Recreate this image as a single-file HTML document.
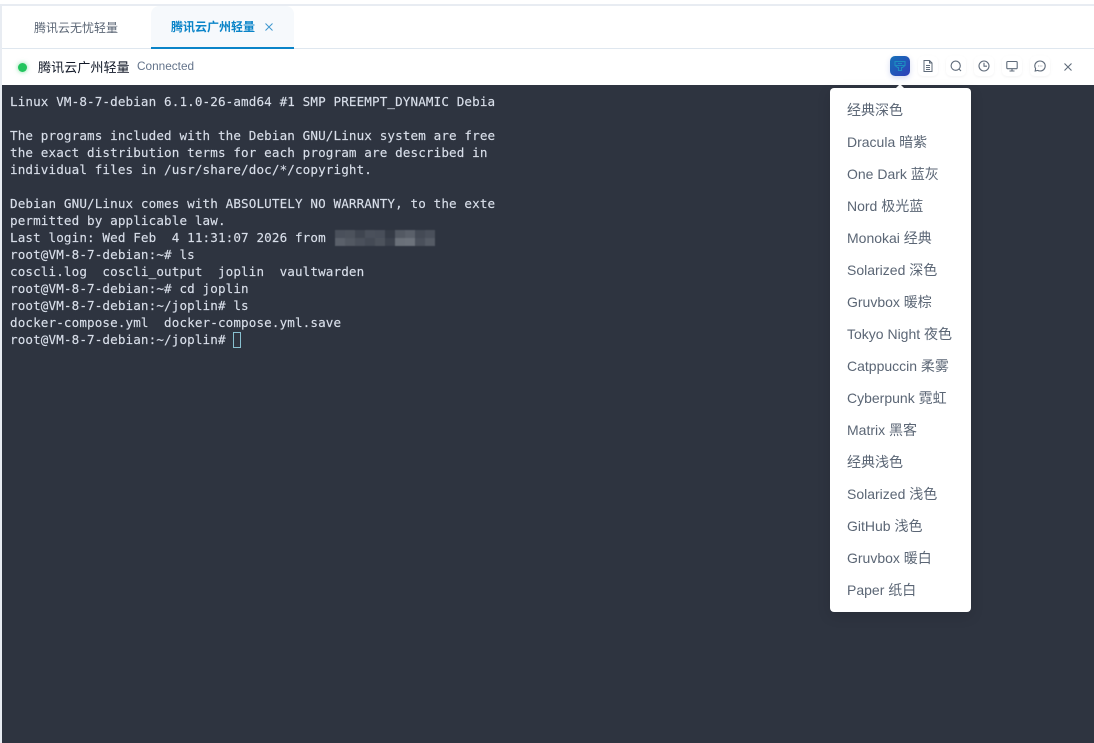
<!DOCTYPE html>
<html><head><meta charset="utf-8">
<style>
*{box-sizing:border-box}
html,body{margin:0;padding:0;width:1094px;height:743px;overflow:hidden;background:#fff;font-family:"Liberation Sans","Noto Sans CJK SC",sans-serif}
.abs{position:absolute}
#top{left:0;top:4px;width:1094px;height:2px;background:#e8ecf2}
#left{left:0;top:4px;width:2px;height:739px;background:#e8ecf2}
#tabline{left:2px;top:48px;width:1092px;height:1px;background:#dfe7ef}
#t1{left:34px;top:19px;font-size:12px;line-height:18px;color:#5b6675;white-space:nowrap}
#t2bg{left:151px;top:6px;width:143px;height:43px;background:#f6f9fc;border-radius:8px 8px 0 0;border-bottom:2px solid #0a84c8}
#t2{left:171px;top:18px;font-size:12px;font-weight:bold;line-height:18px;color:#0a84c8;white-space:nowrap}
#dot{left:17.5px;top:62.5px;width:9px;height:9px;border-radius:50%;background:#22c55e;box-shadow:0 0 5px rgba(34,197,94,.6)}
#name{left:38px;top:59px;font-size:13.1px;line-height:18px;color:#111827;white-space:nowrap}
#conn{left:137px;top:58px;font-size:11.8px;line-height:17px;color:#64748b;white-space:nowrap}
.ib{position:absolute;top:56px;width:20px;height:20px;border-radius:5px;background:#fff;box-shadow:0 1px 3px rgba(15,23,42,.05)}
.ib svg{position:absolute;left:3px;top:3px}
#active{left:890px;background:linear-gradient(135deg,#1470b8,#2f3fb8);box-shadow:0 2px 6px rgba(40,70,180,.2)}
#term{left:2px;top:85px;width:1092px;height:658px;background:#2e3440}
#txt{left:10px;top:93px;margin:0;font-family:"DejaVu Sans Mono","Liberation Mono",monospace;font-size:12.6px;letter-spacing:.12px;line-height:17px;color:#d8dee9;white-space:pre;-webkit-text-stroke:.15px #d8dee9}
#cur{left:233px;top:332px;width:8px;height:16px;border:1px solid #88c0d0}
#blur{left:335px;top:230px;width:100px;height:16px;display:grid;grid-template-columns:repeat(10,10px);grid-template-rows:repeat(2,8px);filter:blur(.6px)}
#menu{left:830px;top:88px;width:141px;height:524px;background:#fff;border-radius:4px;padding-top:6px;box-shadow:0 4px 14px rgba(0,0,0,.12)}
#arrow{left:895px;top:84px;width:0;height:0;border-left:5px solid transparent;border-right:5px solid transparent;border-bottom:5px solid #fff}
.mi{height:32px;line-height:32px;padding-left:17px;font-size:14px;color:#5b6675;white-space:nowrap}
</style></head>
<body>
<div class="abs" id="top"></div>
<div class="abs" id="tabline"></div>
<div class="abs" id="t2bg"></div>
<div class="abs" id="t1">腾讯云无忧轻量</div>
<div class="abs" id="t2">腾讯云广州轻量</div>
<svg class="abs" style="left:264px;top:22px" width="10" height="10" viewBox="0 0 10 10"><path d="M1.5 1.5L8.5 8.5M8.5 1.5L1.5 8.5" stroke="#3f97cf" stroke-width="1" fill="none"/></svg>
<div class="abs" id="dot"></div>
<div class="abs" id="name">腾讯云广州轻量</div>
<div class="abs" id="conn">Connected</div>

<div class="ib" id="active"><svg width="14" height="14" viewBox="0 0 14 14" fill="none" stroke="#1d8ec0" stroke-width="1.1"><path d="M2 2.5H12V6.5H2ZM2 6.5L4.5 8.5H5.5V11.5H8.5V8.5H9.5L12 6.5M5 4.5H9"/></svg></div>
<div class="ib" style="left:918px"><svg width="14" height="14" viewBox="0 0 14 14" fill="none" stroke="#5f6b7a" stroke-width="1"><path d="M3 1.5H8.5L11 4V12.5H3ZM8.5 1.5V4H11M5 6.5H9M5 8.5H9M5 10.5H9"/></svg></div>
<div class="ib" style="left:946px"><svg width="14" height="14" viewBox="0 0 14 14" fill="none" stroke="#5f6b7a" stroke-width="1.1"><circle cx="6.7" cy="6.7" r="4.6"/><path d="M10 10L12 12"/></svg></div>
<div class="ib" style="left:974px"><svg width="14" height="14" viewBox="0 0 14 14" fill="none" stroke="#5f6b7a" stroke-width="1.1"><circle cx="7" cy="7" r="5"/><path d="M7 3.8V7.2H10"/></svg></div>
<div class="ib" style="left:1002px"><svg width="14" height="14" viewBox="0 0 14 14" fill="none" stroke="#5f6b7a" stroke-width="1.1"><rect x="1.8" y="2.5" width="10.4" height="7.2" rx="1"/><path d="M7 9.7V12M4.5 12H9.5"/></svg></div>
<div class="ib" style="left:1030px"><svg width="14" height="14" viewBox="0 0 14 14" fill="none" stroke="#5f6b7a" stroke-width="1.1"><path d="M7 2C4 2 1.8 4.2 1.8 7C1.8 8 2.1 8.9 2.6 9.6L2.2 12L4.6 11.4C5.3 11.8 6.1 12 7 12C10 12 12.2 9.8 12.2 7C12.2 4.2 10 2 7 2Z"/><path d="M5 7H5.6M6.8 7H7.4M8.6 7H9.2"/></svg></div>
<svg class="abs" style="left:1063px;top:62px" width="10" height="10" viewBox="0 0 10 10"><path d="M1.5 1.5L8.5 8.5M8.5 1.5L1.5 8.5" stroke="#5f6b7a" stroke-width="1.1" fill="none"/></svg>

<div class="abs" id="term"></div>
<div class="abs" id="left"></div>
<pre class="abs" id="txt">Linux VM-8-7-debian 6.1.0-26-amd64 #1 SMP PREEMPT_DYNAMIC Debia

The programs included with the Debian GNU/Linux system are free
the exact distribution terms for each program are described in
individual files in /usr/share/doc/*/copyright.

Debian GNU/Linux comes with ABSOLUTELY NO WARRANTY, to the exte
permitted by applicable law.
Last login: Wed Feb  4 11:31:07 2026 from
root@VM-8-7-debian:~# ls
coscli.log  coscli_output  joplin  vaultwarden
root@VM-8-7-debian:~# cd joplin
root@VM-8-7-debian:~/joplin# ls
docker-compose.yml  docker-compose.yml.save
root@VM-8-7-debian:~/joplin# </pre>
<div class="abs" id="blur">
<i style="background:#4a505b"></i><i style="background:#4c525c"></i><i style="background:#3f4550"></i><i style="background:#4a505b"></i><i style="background:#484e59"></i><i style="background:#353b46"></i><i style="background:#535963"></i><i style="background:#5a606a"></i><i style="background:#444a55"></i><i style="background:#4a505b"></i>
<i style="background:#5a606a"></i><i style="background:#525862"></i><i style="background:#4a505b"></i><i style="background:#444a55"></i><i style="background:#4c525c"></i><i style="background:#3c424d"></i><i style="background:#6a7079"></i><i style="background:#6c727b"></i><i style="background:#4a505b"></i><i style="background:#555b65"></i>
</div>
<div class="abs" id="cur"></div>
<div class="abs" id="arrow"></div>
<div class="abs" id="menu">
<div class="mi">经典深色</div>
<div class="mi">Dracula 暗紫</div>
<div class="mi">One Dark 蓝灰</div>
<div class="mi">Nord 极光蓝</div>
<div class="mi">Monokai 经典</div>
<div class="mi">Solarized 深色</div>
<div class="mi">Gruvbox 暖棕</div>
<div class="mi">Tokyo Night 夜色</div>
<div class="mi">Catppuccin 柔雾</div>
<div class="mi">Cyberpunk 霓虹</div>
<div class="mi">Matrix 黑客</div>
<div class="mi">经典浅色</div>
<div class="mi">Solarized 浅色</div>
<div class="mi">GitHub 浅色</div>
<div class="mi">Gruvbox 暖白</div>
<div class="mi">Paper 纸白</div>
</div>
</body></html>
